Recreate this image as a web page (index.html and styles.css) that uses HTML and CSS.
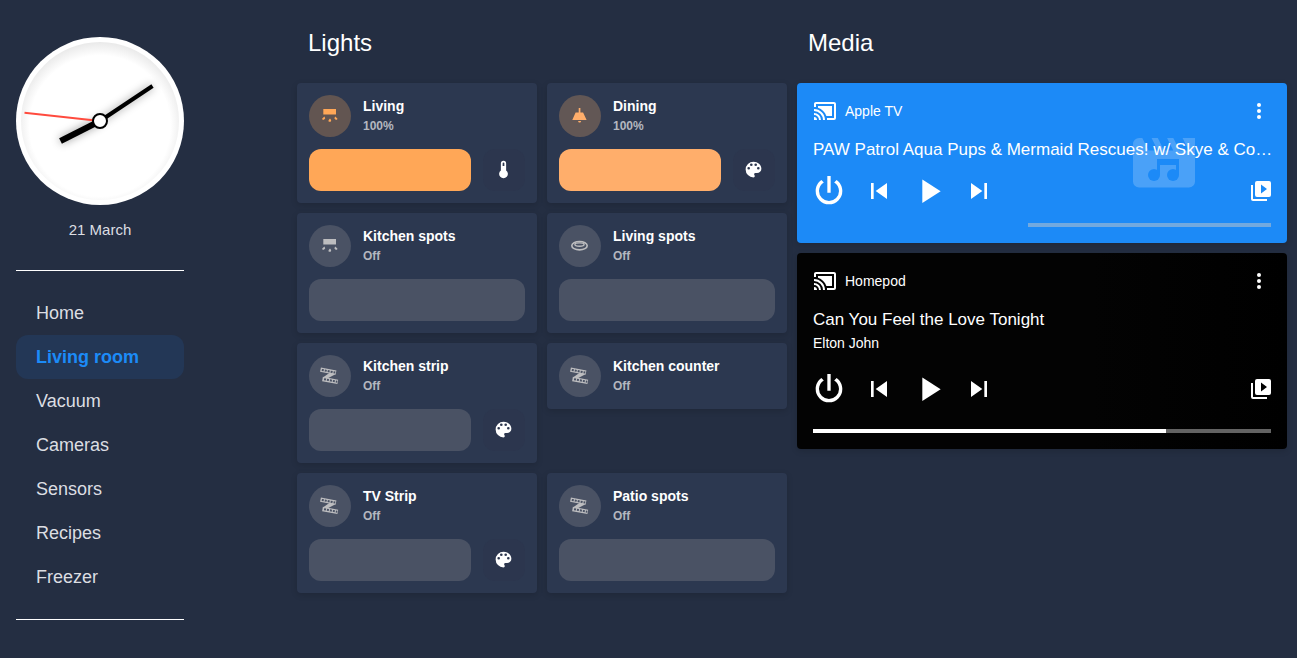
FILE: index.html
```html
<!DOCTYPE html>
<html lang="en">
<head>
    <meta charset="UTF-8">
    <meta name="viewport" content="width=device-width, initial-scale=1">
    <title>Living room</title>
    <link rel="stylesheet" href="styles.css">
</head>
<body>
    <!-- shared icons -->
    <svg class="sprite" aria-hidden="true">
        <symbol id="ceiling" viewBox="0 0 21 21">
            <path d="M4.300 4H17v5.500H4.300z"/>
            <path d="M11 13.500q2 2 .6 3.200h-1.900q-1-1.400 1.300-3.200zM3.200 13.500l2.300-2 .7 1.900-1.300 1.300-1.400.1zM18.400 13.500l-2.300-2-.7 1.900 1.300 1.300 1.400.1z"/>
        </symbol>
        <symbol id="pendant" viewBox="0 0 21 21">
            <path d="M9.700 3h1.700v4.600h2.700l3.500 7.400H3.300l3.300-7.400h3.100zM9 16h3.200l-.8 1.600H9.800z"/>
        </symbol>
        <symbol id="spot" viewBox="0 0 21 21">
            <g fill="none" stroke="currentColor">
                <ellipse cx="10.500" cy="10.700" rx="7.700" ry="4.200" stroke-width="1.600"/>
                <ellipse cx="10.500" cy="9.600" rx="4.600" ry="1.700" stroke-width="1.400"/>
            </g>
        </symbol>
        <symbol id="strip" viewBox="0 0 21 21">
            <g fill="none" stroke="currentColor">
                <path d="M1.500 4.700l15.500 3M3.500 14l15.300 2.800" stroke-width="4.400"/>
                <path d="M15.500 8.500L7 13M12 8L5.500 12.500" stroke-width="2"/>
            </g>
            <path class="strip-leds" d="M2.800 4.900l13.500 2.700M5 14.200l13.300 2.500"/>
        </symbol>
        <symbol id="palette" viewBox="0 0 24 24">
            <path d="M17.500 12A1.500 1.500 0 0 1 16 10.500 1.500 1.500 0 0 1 17.500 9 1.500 1.500 0 0 1 19 10.500 1.500 1.500 0 0 1 17.500 12M14.500 8A1.500 1.500 0 0 1 13 6.500 1.500 1.500 0 0 1 14.500 5 1.500 1.500 0 0 1 16 6.500 1.500 1.500 0 0 1 14.500 8M9.500 8A1.500 1.500 0 0 1 8 6.500 1.500 1.500 0 0 1 9.500 5 1.500 1.500 0 0 1 11 6.500 1.500 1.500 0 0 1 9.500 8M6.500 12A1.500 1.500 0 0 1 5 10.500 1.500 1.500 0 0 1 6.500 9 1.500 1.500 0 0 1 8 10.500 1.500 1.500 0 0 1 6.500 12M12 3A9 9 0 0 0 3 12 9 9 0 0 0 12 21 1.500 1.500 0 0 0 13.500 19.500C13.500 19.110 13.350 18.760 13.110 18.500 12.880 18.230 12.730 17.880 12.730 17.500A1.500 1.500 0 0 1 14.230 16H16A5 5 0 0 0 21 11C21 6.580 16.970 3 12 3Z"/>
        </symbol>
        <symbol id="thermometer" viewBox="0 0 24 24">
            <path d="M15 13V5A3 3 0 0 0 9 5V13A5 5 0 1 0 15 13M12 4A1 1 0 0 1 13 5V8H11V5A1 1 0 0 1 12 4Z"/>
        </symbol>
        <symbol id="cast" viewBox="0 0 24 24">
            <path d="M21 3H3C1.890 3 1 3.890 1 5V8H3V5H21V19H14V21H21A2 2 0 0 0 23 19V5C23 3.890 22.100 3 21 3M1 10V12A9 9 0 0 1 10 21H12C12 14.920 7.070 10 1 10M19 7H5V8.630C8.960 9.910 12.090 13.040 13.370 17H19M1 14V16A5 5 0 0 1 6 21H8A7 7 0 0 0 1 14M1 18V21H4A3 3 0 0 0 1 18Z"/>
        </symbol>
        <symbol id="dots" viewBox="0 0 24 24">
            <circle cx="12" cy="6" r="2"/><circle cx="12" cy="12" r="2"/><circle cx="12" cy="18" r="2"/>
        </symbol>
        <symbol id="power" viewBox="0 0 24 24">
            <path d="M16.560 5.440L15.110 6.890C16.840 7.940 18 9.830 18 12A6 6 0 0 1 12 18 6 6 0 0 1 6 12C6 9.830 7.160 7.940 8.880 6.880L7.440 5.440C5.360 6.880 4 9.280 4 12A8 8 0 0 0 12 20 8 8 0 0 0 20 12C20 9.280 18.640 6.880 16.560 5.440M13 3H11V13H13"/>
        </symbol>
        <symbol id="previous" viewBox="0 0 24 24"><path d="M6 18V6H8V18M9.500 12L18 6V18L9.500 12Z"/></symbol>
        <symbol id="play" viewBox="0 0 24 24"><path d="M8 5.140V19.140L19 12.140L8 5.140Z"/></symbol>
        <symbol id="next" viewBox="0 0 24 24"><path d="M16 18H18V6H16M6 18L14.500 12L6 6V18Z"/></symbol>
        <symbol id="library" viewBox="0 0 24 24">
            <path fill-rule="evenodd" d="M4 6H2V20A2 2 0 0 0 4 22H18V20H4ZM20 2H8A2 2 0 0 0 6 4V16A2 2 0 0 0 8 18H20A2 2 0 0 0 22 16V4A2 2 0 0 0 20 2ZM12 14.500V5.500L18 10Z"/>
        </symbol>
    </svg>

    <div class="dashboard">
        <aside class="sidebar">
            <svg class="clock" viewBox="0 0 168 168" role="img" aria-label="Clock">
                <defs>
                    <radialGradient id="face" cx="84" cy="89" r="86" gradientUnits="userSpaceOnUse">
                        <stop offset="0.820" stop-color="#fff"/>
                        <stop offset="1" stop-color="#e6e6e6"/>
                    </radialGradient>
                    <filter id="shadow" x="-30%" y="-30%" width="160%" height="160%">
                        <feDropShadow dx="0" dy="0" stdDeviation="4" flood-opacity="0.400"/>
                    </filter>
                </defs>
                <circle cx="84" cy="84" r="84" fill="#fff"/>
                <circle cx="84" cy="84" r="79" fill="url(#face)"/>
                <g filter="url(#shadow)">
                    <path d="M84 84L44.500 104" stroke="#000" stroke-width="6"/>
                    <path d="M84 84L136.500 49" stroke="#000" stroke-width="4"/>
                </g>
                <path d="M84 84L8.500 75.800" stroke="#ff4b3e" stroke-width="2"/>
                <circle cx="84" cy="84" r="7" fill="#fff" stroke="#000" stroke-width="2"/>
            </svg>
            <p class="date">21 March</p>
            <nav class="menu">
                <a href="#">Home</a>
                <a href="#" class="active" aria-current="page">Living room</a>
                <a href="#">Vacuum</a>
                <a href="#">Cameras</a>
                <a href="#">Sensors</a>
                <a href="#">Recipes</a>
                <a href="#">Freezer</a>
            </nav>
        </aside>

        <main class="content">
            <section>
                <h1>Lights</h1>
                <div class="lights">
                    <article class="light on">
                        <div class="light-head">
                            <button class="light-icon" aria-label="Toggle Living"><svg><use href="#ceiling"/></svg></button>
                            <div><h2>Living</h2><p>100%</p></div>
                        </div>
                        <div class="light-controls">
                            <input type="range" value="100" aria-label="Living brightness">
                            <button class="tool" aria-label="Temperature"><svg><use href="#thermometer"/></svg></button>
                        </div>
                    </article>
                    <article class="light on soft">
                        <div class="light-head">
                            <button class="light-icon" aria-label="Toggle Dining"><svg><use href="#pendant"/></svg></button>
                            <div><h2>Dining</h2><p>100%</p></div>
                        </div>
                        <div class="light-controls">
                            <input type="range" value="100" aria-label="Dining brightness">
                            <button class="tool" aria-label="Color"><svg><use href="#palette"/></svg></button>
                        </div>
                    </article>
                    <article class="light">
                        <div class="light-head">
                            <button class="light-icon" aria-label="Toggle Kitchen spots"><svg><use href="#ceiling"/></svg></button>
                            <div><h2>Kitchen spots</h2><p>Off</p></div>
                        </div>
                        <div class="light-controls">
                            <input type="range" value="0" aria-label="Kitchen spots brightness">
                        </div>
                    </article>
                    <article class="light">
                        <div class="light-head">
                            <button class="light-icon" aria-label="Toggle Living spots"><svg><use href="#spot"/></svg></button>
                            <div><h2>Living spots</h2><p>Off</p></div>
                        </div>
                        <div class="light-controls">
                            <input type="range" value="0" aria-label="Living spots brightness">
                        </div>
                    </article>
                    <article class="light">
                        <div class="light-head">
                            <button class="light-icon" aria-label="Toggle Kitchen strip"><svg><use href="#strip"/></svg></button>
                            <div><h2>Kitchen strip</h2><p>Off</p></div>
                        </div>
                        <div class="light-controls">
                            <input type="range" value="0" aria-label="Kitchen strip brightness">
                            <button class="tool" aria-label="Color"><svg><use href="#palette"/></svg></button>
                        </div>
                    </article>
                    <article class="light">
                        <div class="light-head">
                            <button class="light-icon" aria-label="Toggle Kitchen counter"><svg><use href="#strip"/></svg></button>
                            <div><h2>Kitchen counter</h2><p>Off</p></div>
                        </div>
                    </article>
                    <article class="light">
                        <div class="light-head">
                            <button class="light-icon" aria-label="Toggle TV Strip"><svg><use href="#strip"/></svg></button>
                            <div><h2>TV Strip</h2><p>Off</p></div>
                        </div>
                        <div class="light-controls">
                            <input type="range" value="0" aria-label="TV Strip brightness">
                            <button class="tool" aria-label="Color"><svg><use href="#palette"/></svg></button>
                        </div>
                    </article>
                    <article class="light">
                        <div class="light-head">
                            <button class="light-icon" aria-label="Toggle Patio spots"><svg><use href="#strip"/></svg></button>
                            <div><h2>Patio spots</h2><p>Off</p></div>
                        </div>
                        <div class="light-controls">
                            <input type="range" value="0" aria-label="Patio spots brightness">
                        </div>
                    </article>
                </div>
            </section>

            <section>
                <h1>Media</h1>
                <div class="players">
                    <article class="player tv">
                        <svg class="artwork" viewBox="0 0 62 50" aria-hidden="true">
                            <mask id="note">
                                <path fill="#fff" d="M0 0h62v50H0z"/>
                                <g fill="#000">
                                    <path d="M24 21h22v16h-3V27H27v10h-3z"/>
                                    <circle cx="21" cy="37" r="6"/>
                                    <circle cx="40" cy="37" r="6"/>
                                </g>
                            </mask>
                            <g mask="url(#note)">
                                <path transform="scale(3.100) translate(-2 -4)" d="M18 4L20 8H17L15 4H13L15 8H12L10 4H8L10 8H7L5 4H4A2 2 0 0 0 2 6V18A2 2 0 0 0 4 20H20A2 2 0 0 0 22 18V4H18Z"/>
                            </g>
                        </svg>
                        <header>
                            <svg><use href="#cast"/></svg>
                            <span>Apple TV</span>
                            <button class="more" aria-label="More"><svg><use href="#dots"/></svg></button>
                        </header>
                        <h2>PAW Patrol Aqua Pups &amp; Mermaid Rescues! w/ Skye &amp; Co…</h2>
                        <div class="buttons">
                            <button class="big" aria-label="Power"><svg><use href="#power"/></svg></button>
                            <button aria-label="Previous"><svg><use href="#previous"/></svg></button>
                            <button class="big" aria-label="Play"><svg><use href="#play"/></svg></button>
                            <button aria-label="Next"><svg><use href="#next"/></svg></button>
                            <button class="library" aria-label="Browse media"><svg><use href="#library"/></svg></button>
                        </div>
                        <progress value="0" max="100" aria-label="Position"></progress>
                    </article>
                    <article class="player homepod">
                        <header>
                            <svg><use href="#cast"/></svg>
                            <span>Homepod</span>
                            <button class="more" aria-label="More"><svg><use href="#dots"/></svg></button>
                        </header>
                        <h2>Can You Feel the Love Tonight</h2>
                        <p>Elton John</p>
                        <div class="buttons">
                            <button class="big" aria-label="Power"><svg><use href="#power"/></svg></button>
                            <button aria-label="Previous"><svg><use href="#previous"/></svg></button>
                            <button class="big" aria-label="Play"><svg><use href="#play"/></svg></button>
                            <button aria-label="Next"><svg><use href="#next"/></svg></button>
                            <button class="library" aria-label="Browse media"><svg><use href="#library"/></svg></button>
                        </div>
                        <progress value="77" max="100" aria-label="Position"></progress>
                    </article>
                </div>
            </section>
        </main>
    </div>
</body>
</html>
```
FILE: styles.css
```css
* {
    box-sizing: border-box;
}
body {
    margin: 0;
    background: #242e42;
    color: #fff;
    font-family: "Liberation Sans", Helvetica, Arial, sans-serif;
}
h1, h2, p {
    margin: 0;
}
button {
    display: flex;
    align-items: center;
    justify-content: center;
    padding: 0;
    border: 0;
    background: none;
    color: inherit;
    cursor: pointer;
}
svg {
    display: block;
    flex: none;
    fill: currentColor;
}
.sprite {
    position: absolute;
    width: 0;
    height: 0;
}
.dashboard {
    display: flex;
}

/* sidebar */
.sidebar {
    flex: none;
    width: 200px;
    padding: 37px 16px;
}
.clock {
    width: 100%;
}
.date {
    margin: 15px 0 30px;
    font-size: 15px;
    line-height: 20px;
    text-align: center;
    color: #dcdee2;
}
.menu {
    padding: 20px 0;
    border-top: 1px solid #fff;
    border-bottom: 1px solid #fff;
}
.menu a {
    display: block;
    padding: 0 20px;
    border-radius: 12px;
    font-size: 18px;
    line-height: 44px;
    color: #dcdee2;
    text-decoration: none;
}
.menu .active {
    background: #233756;
    color: #1c8bf7;
    font-weight: bold;
}

/* main columns */
.content {
    flex: 1;
    min-width: 0;
    display: grid;
    grid-template-columns: repeat(2, minmax(0, 1fr));
    gap: 10px;
    padding: 27px 10px 27px 97px;
}
h1 {
    margin: 0 11px 24px;
    font-size: 24px;
    font-weight: normal;
    line-height: 32px;
}

/* lights */
.lights {
    display: grid;
    grid-template-columns: repeat(2, minmax(0, 1fr));
    align-items: start;
    gap: 10px;
}
.light {
    display: flex;
    flex-direction: column;
    gap: 12px;
    padding: 12px;
    border-radius: 4px;
    background: #2c3850;
    box-shadow: 0 2px 6px rgba(0, 0, 0, 0.15);
    color: #bdbdbf;
}
.light-head, .light-controls {
    display: flex;
    align-items: center;
    gap: 12px;
}
.light-icon, .tool {
    width: 42px;
    height: 42px;
    padding: 0 1px 1px 0;
}
.light-icon {
    border-radius: 50%;
    background: #4a5264;
}
.light-icon svg, .tool svg {
    width: 21px;
    height: 21px;
}
.strip-leds {
    fill: none;
    stroke: #4a5264;
    stroke-width: 2;
    stroke-dasharray: 2 1;
}
.light h2 {
    font-size: 14px;
    line-height: 20px;
    color: #fff;
}
.light p {
    font-size: 12px;
    font-weight: bold;
    line-height: 20px;
    color: #b4b7bf;
}
.light input {
    flex: 1;
    min-width: 0;
    height: 42px;
    margin: 0;
    border-radius: 12px;
    background: #4a5264;
    appearance: none;
}
.light input::-webkit-slider-thumb {
    appearance: none;
    width: 1px;
    height: 42px;
}
.tool {
    border-radius: 12px;
    background: #2c364e;
    color: #fff;
}
.on {
    color: #ffa757;
}
.on .light-icon {
    background: #625551;
}
.light.on input {
    background: #ffa757;
}
.soft {
    color: #ffae6b;
}
.soft .light-icon {
    background: #625755;
}
.light.soft input {
    background: #ffae6b;
}

/* media */
.players {
    display: grid;
    grid-template-columns: minmax(0, 1fr);
    gap: 10px;
}
.player {
    position: relative;
    padding: 16px;
    border-radius: 4px;
    box-shadow: 0 2px 6px rgba(0, 0, 0, 0.15);
}
.tv {
    background: #1c8af7;
}
.homepod {
    background: linear-gradient(90deg, #030303 60%, #000);
}
.player header {
    display: flex;
    align-items: center;
    gap: 8px;
    font-size: 14px;
}
.player header svg {
    width: 24px;
    height: 24px;
}
.more {
    margin-left: auto;
}
.player h2 {
    position: relative;
    margin: 15px -12px 0 0;
    overflow: hidden;
    font-size: 17px;
    font-weight: normal;
    line-height: 24px;
    text-overflow: ellipsis;
    white-space: nowrap;
}
.player p {
    font-size: 14px;
    line-height: 22px;
}
.buttons {
    display: flex;
    align-items: center;
    margin: 9px 0 12px -9px;
}
.homepod .buttons {
    margin: 15px 0 20px -9px;
}
.buttons button {
    width: 50px;
    height: 40px;
}
.buttons svg {
    width: 32px;
    height: 32px;
}
.buttons .big svg {
    width: 40px;
    height: 40px;
}
.buttons .library {
    width: 20px;
    margin-left: auto;
}
.buttons .library svg {
    width: 24px;
    height: 24px;
}
progress {
    display: block;
    width: 100%;
    height: 4px;
    border: 0;
    appearance: none;
}
progress::-webkit-progress-bar {
    background: #636363;
}
progress::-webkit-progress-value {
    background: #fff;
}
.tv progress {
    width: 53%;
    margin-left: auto;
}
.tv progress::-webkit-progress-bar {
    background: #72a9df;
}
.artwork {
    position: absolute;
    top: 55px;
    right: 92px;
    width: 62px;
    opacity: 0.2;
}
```
